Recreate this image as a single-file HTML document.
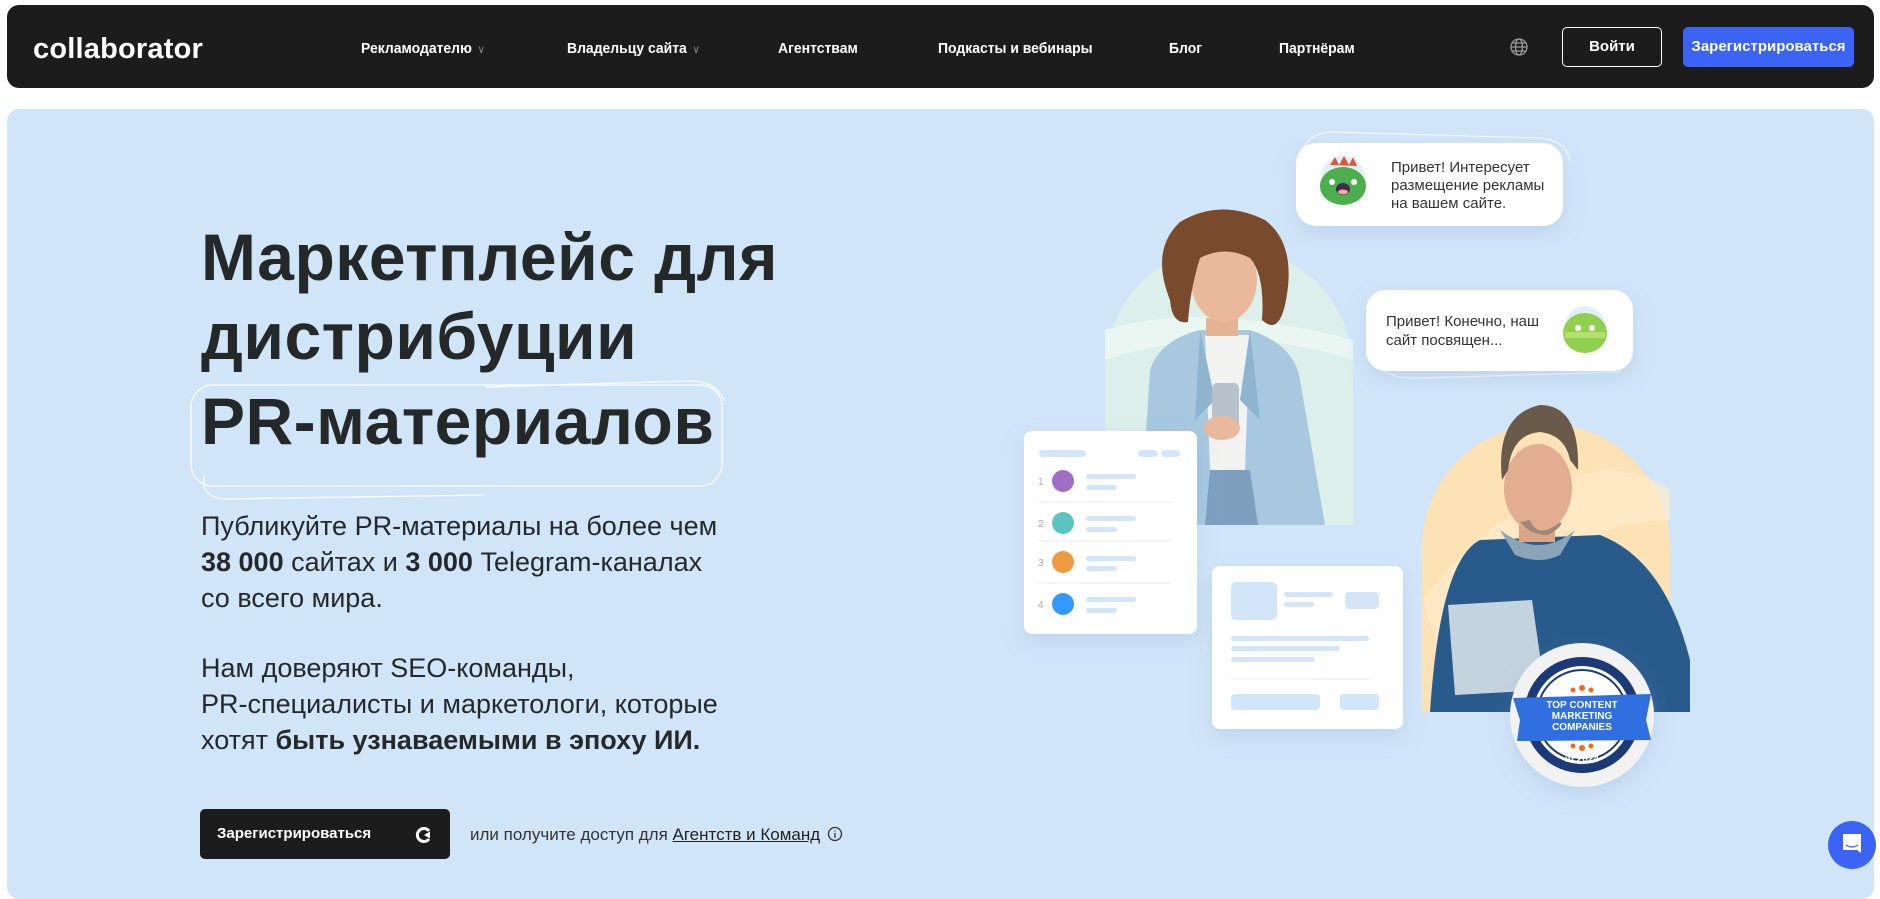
<!DOCTYPE html>
<html><head><meta charset="utf-8">
<style>
*{margin:0;padding:0;box-sizing:border-box}
html,body{width:1880px;height:884px;overflow:hidden;background:#fff;font-family:"Liberation Sans",Arial,sans-serif}
.nav{position:absolute;left:7px;top:5px;width:1867px;height:83px;background:#1c1c1c;border-radius:12px}
.logo{position:absolute;left:26px;top:28px;color:#fff;font-size:29px;font-weight:700;letter-spacing:0.2px}
.ni{position:absolute;top:40px;color:#fff;font-size:15px;font-weight:700;transform:scaleX(0.93);transform-origin:left}
.ni .c{color:#888;font-size:11px;font-weight:400;margin-left:6px}
.btn1{position:absolute;left:1562px;top:27px;width:100px;height:40px;border:1px solid #fff;border-radius:5px;color:#fff;font-size:15px;font-weight:700;text-align:center;line-height:38px}
.btn2{position:absolute;left:1683px;top:27px;width:171px;height:40px;background:#3b63f6;border-radius:5px;color:#fff;font-size:15px;font-weight:700;text-align:center;line-height:40px}
.hero{position:absolute;left:7px;top:109px;width:1867px;height:790px;background:#d1e5f9;border-radius:12px}
h1{position:absolute;left:201px;font-size:66px;font-weight:700;color:#252829;letter-spacing:0.5px;white-space:nowrap;line-height:1}
.p{position:absolute;left:201px;font-size:27px;color:#26292b;line-height:36px;white-space:nowrap}
.cta{position:absolute;left:200px;top:809px;width:250px;height:50px;background:#1c1c1c;border-radius:5px;color:#fff;font-size:15px;font-weight:700;line-height:50px;padding-left:17px}
.or{position:absolute;left:470px;top:825px;font-size:17px;color:#333}
.or u{color:#222}
</style></head><body>
<div class="nav">
  <div class="logo">collab<span>o</span>rator</div>
</div>
<div class="ni" style="left:361px">Рекламодателю<span class="c">∨</span></div>
<div class="ni" style="left:567px">Владельцу сайта<span class="c">∨</span></div>
<div class="ni" style="left:778px">Агентствам</div>
<div class="ni" style="left:938px">Подкасты и вебинары</div>
<div class="ni" style="left:1169px">Блог</div>
<div class="ni" style="left:1279px">Партнёрам</div>
<svg style="position:absolute;left:1509px;top:37px" width="20" height="20" viewBox="0 0 20 20" fill="none" stroke="#9a9a9a" stroke-width="1.3"><circle cx="10" cy="10" r="8"/><ellipse cx="10" cy="10" rx="3.5" ry="8"/><path d="M2 10h16M3.5 6h13M3.5 14h13"/></svg>
<div class="btn1">Войти</div>
<div class="btn2">Зарегистрироваться</div>

<div class="hero"></div>
<h1 style="top:224px">Маркетплейс для</h1>
<h1 style="top:303px">дистрибуции</h1>
<h1 style="top:388px">PR-материалов</h1>
<svg style="position:absolute;left:185px;top:371px" width="550" height="130" fill="none" stroke="#fff" stroke-width="1.3" opacity="0.9">
<rect x="6" y="14" width="531" height="101" rx="22"/>
<path d="M20 104 Q14 126 40 128 L300 124" />
<path d="M300 16 L505 10 Q530 10 540 30"/>
</svg>
<div class="p" style="top:508px">Публикуйте PR-материалы на более чем<br><b>38 000</b> сайтах и <b>3 000</b> Telegram-каналах<br>со всего мира.</div>
<div class="p" style="top:650px">Нам доверяют SEO-команды,<br>PR-специалисты и маркетологи, которые<br>хотят <b>быть узнаваемыми в эпоху ИИ.</b></div>
<div class="cta">Зарегистрироваться
<svg style="position:absolute;left:215px;top:17px" width="18" height="18" viewBox="0 0 18 18"><path d="M14 5 A6.5 6.5 0 1 0 14 13" stroke="#fff" stroke-width="3" fill="none"/><path d="M9 9 L15 5.5 L15 12.5Z" fill="#fff"/></svg></div>
<div class="or">или получите доступ для <u>Агентств и Команд</u>
<svg style="position:absolute;left:357px;top:1px" width="16" height="16" viewBox="0 0 16 16" fill="none" stroke="#333" stroke-width="1.3"><circle cx="8" cy="8" r="6.5"/><path d="M8 7v5M8 4.5v1"/></svg></div>

<svg style="position:absolute;left:0;top:0" width="1880" height="884">
<defs>
<filter id="sh" x="-20%" y="-20%" width="140%" height="150%"><feDropShadow dx="0" dy="8" stdDeviation="10" flood-color="#7fa0c8" flood-opacity="0.25"/></filter>
</defs>
<path d="M1105 525 V370 A124 124 0 0 1 1353 370 V525Z" fill="#dcefea"/>
<path d="M1105 330 Q1200 300 1353 340 V360 Q1230 320 1105 360Z" fill="#e9f6f2"/>
<path d="M1140 525 L1150 370 Q1160 340 1200 330 L1250 330 Q1295 345 1300 380 L1325 525Z" fill="#a7c8df"/>
<path d="M1205 335 L1250 335 L1245 470 L1210 470Z" fill="#f2f2f0"/>
<path d="M1210 470 L1250 470 L1258 525 L1205 525Z" fill="#7f9fbf"/>
<path d="M1200 330 L1215 400 L1195 420Z M1250 330 L1240 400 L1260 420Z" fill="#8fb4d0"/>
<rect x="1212" y="383" width="27" height="45" rx="5" fill="#b8c2cc"/>
<ellipse cx="1222" cy="428" rx="18" ry="12" fill="#e8b99c"/>
<path d="M1206 318 h32 v18 h-32z" fill="#e6b294"/>
<ellipse cx="1224" cy="280" rx="33" ry="42" fill="#eab99b"/>
<path d="M1170 300 Q1150 250 1180 222 Q1220 198 1265 220 Q1298 245 1285 305 Q1278 335 1262 320 Q1265 275 1250 258 Q1225 245 1200 258 Q1190 290 1188 322 Q1172 325 1170 300Z" fill="#7a4a2d"/>
<path d="M1422 712 V548 A124 124 0 0 1 1670 548 V712Z" fill="#fde2b5"/>
<path d="M1422 600 Q1500 500 1600 470 Q1640 470 1670 490 V520 Q1560 520 1440 650Z" fill="#feeccb" opacity="0.7"/>
<path d="M1430 712 Q1440 560 1480 540 L1600 535 Q1665 560 1690 660 L1690 712Z" fill="#285a8c"/>
<path d="M1500 530 Q1540 560 1575 530 L1560 555 Q1540 565 1515 555Z" fill="#8aa4b8"/>
<rect x="1519" y="520" width="36" height="22" fill="#d9a587"/>
<ellipse cx="1538" cy="488" rx="34" ry="44" fill="#e2ad90"/>
<path d="M1530 520 Q1538 540 1560 522 Q1565 525 1548 535 Q1530 535 1520 522Z" fill="#a08878"/>
<path d="M1502 480 Q1495 415 1540 405 Q1580 405 1578 470 L1570 460 Q1565 435 1540 432 Q1512 434 1508 470Z" fill="#6a5a4a"/>
<path d="M1448 605 L1532 600 L1545 690 L1455 695Z" fill="#c5d3df"/>
<g filter="url(#sh)"><rect x="1024" y="431" width="173" height="203" rx="8" fill="#fff"/></g>
<g fill="#d3e5f8">
<rect x="1039" y="450" width="47" height="7" rx="3.5"/><rect x="1138" y="450" width="20" height="7" rx="3.5"/><rect x="1161" y="450" width="19" height="7" rx="3.5"/>
<rect x="1086" y="474" width="50" height="5" rx="2.5"/><rect x="1086" y="485" width="31" height="5" rx="2.5"/>
<rect x="1086" y="516" width="50" height="5" rx="2.5"/><rect x="1086" y="527" width="31" height="5" rx="2.5"/>
<rect x="1086" y="556" width="50" height="5" rx="2.5"/><rect x="1086" y="566" width="31" height="5" rx="2.5"/>
<rect x="1086" y="597" width="50" height="5" rx="2.5"/><rect x="1086" y="608" width="31" height="5" rx="2.5"/>
</g>
<g stroke="#e5eaf0"><path d="M1039 502h132M1039 541h132M1039 583h132"/></g>
<g fill="#aaa" font-size="10" font-family="Liberation Sans"><text x="1038" y="485">1</text><text x="1038" y="527">2</text><text x="1038" y="566">3</text><text x="1038" y="608">4</text></g>
<circle cx="1063" cy="481" r="11" fill="#a06ec6"/><circle cx="1063" cy="523" r="11" fill="#5cc4bf"/><circle cx="1063" cy="562" r="11" fill="#f09a44"/><circle cx="1063" cy="604" r="11" fill="#3399ff"/>
<g filter="url(#sh)"><rect x="1212" y="566" width="191" height="163" rx="8" fill="#fff"/></g>
<g fill="#d3e5f8">
<rect x="1231" y="582" width="46" height="38" rx="5"/><rect x="1284" y="592" width="49" height="5" rx="2.5"/><rect x="1284" y="602" width="30" height="5" rx="2.5"/><rect x="1345" y="592" width="34" height="17" rx="4"/>
<rect x="1231" y="636" width="138" height="5" rx="2.5"/><rect x="1231" y="646" width="109" height="5" rx="2.5"/><rect x="1231" y="657" width="84" height="5" rx="2.5"/>
<rect x="1231" y="694" width="89" height="16" rx="4"/><rect x="1340" y="694" width="39" height="16" rx="4"/>
</g>
<path d="M1230 679h139" stroke="#e5eaf0"/>
<path d="M1300 170 Q1298 135 1330 132 L1540 138 Q1565 140 1570 160" stroke="#fff" fill="none" stroke-width="1.2" opacity="0.8"/>
<g filter="url(#sh)"><rect x="1296" y="143" width="267" height="83" rx="20" fill="#fff"/></g>
<circle cx="1343" cy="178" r="22" fill="#e3eef8"/>
<path d="M1330 165 l5 -8 l4 8 l5 -9 l5 9 l4 -8 l4 9z" fill="#e0563a"/>
<ellipse cx="1343" cy="186" rx="23" ry="19" fill="#4cae4c"/>
<ellipse cx="1343" cy="189" rx="7" ry="6" fill="#3d2b4f"/><ellipse cx="1343" cy="192" rx="5" ry="2.5" fill="#f0a8a0"/>
<circle cx="1332" cy="182" r="3" fill="#fff"/><circle cx="1354" cy="182" r="3" fill="#fff"/>
<g fill="#333" font-size="15" font-family="Liberation Sans"><text x="1391" y="172">Привет! Интересует</text><text x="1391" y="190">размещение рекламы</text><text x="1391" y="208">на вашем сайте.</text></g>
<path d="M1375 355 Q1380 380 1420 378 L1620 372" stroke="#fff" fill="none" stroke-width="1.2" opacity="0.8"/>
<g filter="url(#sh)"><rect x="1366" y="290" width="267" height="81" rx="20" fill="#fff"/></g>
<circle cx="1585" cy="326" r="20" fill="#e3eef8"/>
<ellipse cx="1585" cy="333" rx="22" ry="20" fill="#8fd14f"/>
<rect x="1565" y="332" width="40" height="6" fill="#b5e06e"/>
<circle cx="1578" cy="328" r="3" fill="#fff"/><circle cx="1592" cy="328" r="3" fill="#fff"/>
<g fill="#333" font-size="15" font-family="Liberation Sans"><text x="1386" y="326">Привет! Конечно, наш</text><text x="1386" y="345">сайт посвящен...</text></g>
<g filter="url(#sh)"><circle cx="1582" cy="715" r="72" fill="#f2f2f2"/></g>
<circle cx="1582" cy="715" r="58" fill="#1d3a78"/>
<circle cx="1582" cy="715" r="49" fill="#fff"/>
<circle cx="1582" cy="715" r="45" fill="none" stroke="#1d3a78" stroke-width="2"/>
<path d="M1513 698 L1651 694 L1646 720 L1651 740 L1517 741 L1520 720Z" fill="#2f6fe0"/>
<g fill="#fff" font-size="10" font-weight="700" font-family="Liberation Sans" text-anchor="middle"><text x="1582" y="708">TOP CONTENT</text><text x="1582" y="719">MARKETING</text><text x="1582" y="730">COMPANIES</text></g>
<text x="1582" y="762" fill="#fff" font-size="10" font-weight="700" font-family="Liberation Sans" text-anchor="middle">in 2024</text>
<g fill="#f06a20"><circle cx="1573" cy="690" r="2.5"/><circle cx="1582" cy="688" r="3"/><circle cx="1591" cy="690" r="2.5"/><circle cx="1573" cy="746" r="2.5"/><circle cx="1582" cy="748" r="3"/><circle cx="1591" cy="746" r="2.5"/></g>
<circle cx="1852" cy="845" r="24" fill="#3b63f6"/>
<path d="M1843 834 h18 v19 l-4 -3 h-14z" fill="#fff"/>
<path d="M1846 845 q6 4 12 0" stroke="#3b63f6" stroke-width="1.3" fill="none"/>
</svg>
</body></html>
